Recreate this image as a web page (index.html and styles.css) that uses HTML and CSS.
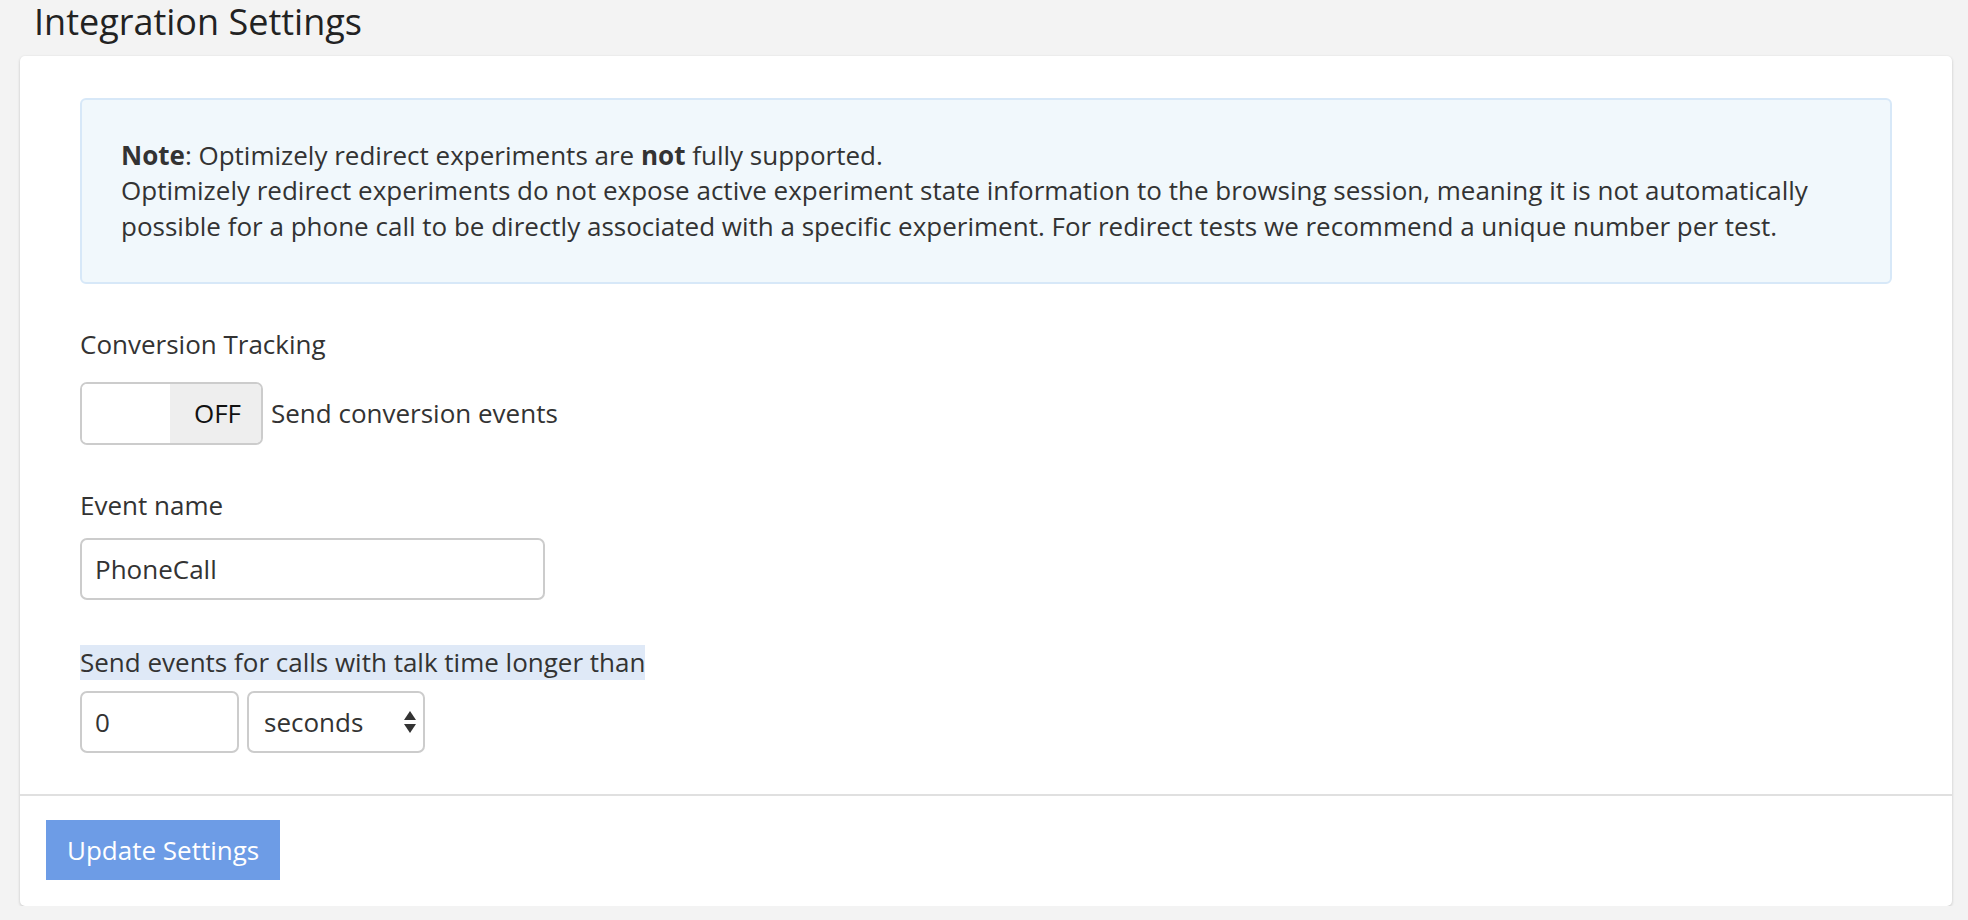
FILE: index.html
```html
<!DOCTYPE html>
<html lang="en">
<head>
    <meta charset="UTF-8">
    <meta name="viewport" content="width=device-width, initial-scale=1.0">
    <title>Integration Settings</title>
    <link rel="stylesheet" href="styles.css">
</head>
<body>
    <h1 class="page-title">Integration Settings</h1>

    <form class="panel">
        <div class="panel-body">
            <div class="alert-info">
                <strong>Note</strong>: Optimizely redirect experiments are <strong>not</strong> fully supported.<br>
                Optimizely redirect experiments do not expose active experiment state information to the browsing session, meaning it is not automatically possible for a phone call to be directly associated with a specific experiment. For redirect tests we recommend a unique number per test.
            </div>

            <div class="form-group">
                <label class="control-label">Conversion Tracking</label>
                <div class="switch-row">
                    <span class="switch">
                        <span class="switch-handle"></span>
                        <span class="switch-off">OFF</span>
                    </span>
                    <span class="switch-text">Send conversion events</span>
                </div>
            </div>

            <div class="form-group">
                <label class="control-label label-tight" for="event-name">Event name</label>
                <input type="text" id="event-name" class="form-control event-input" value="PhoneCall">
            </div>

            <div class="form-group group-duration">
                <label class="control-label label-marked" for="talk-time">Send events for calls with talk time longer than</label>
                <div class="duration-row">
                    <input type="text" id="talk-time" class="form-control number-input" value="0">
                    <span class="select-wrap">
                        <select class="form-control unit-select">
                            <option>seconds</option>
                            <option>minutes</option>
                        </select>
                        <svg class="select-arrows" width="12" height="22" viewBox="0 0 12 22">
                            <polygon points="6,0 12,9 0,9" fill="#333"/>
                            <polygon points="0,13 12,13 6,22" fill="#333"/>
                        </svg>
                    </span>
                </div>
            </div>
        </div>

        <div class="panel-footer">
            <button type="button" class="btn-update">Update Settings</button>
        </div>
    </form>
</body>
</html>
```

FILE: styles.css
```css
body {
    font-family: "Open Sans", "Liberation Sans", sans-serif;
    font-size: 26px;
    line-height: 1.36;
    color: #333;
    background-color: #f3f3f3;
    margin: 0;
    padding: 0 16px 0 20px;
}
.page-title {
    font-size: 36px;
    font-weight: normal;
    line-height: 44px;
    color: #222;
    margin: 0 0 12px 14px;
}
.panel {
    background-color: #fff;
    border-radius: 5px;
    box-shadow: 0 1px 3px rgba(0,0,0,0.2);
}
.panel-body {
    padding: 42px 60px 41px 60px;
}
.alert-info {
    background-color: #f1f8fc;
    border: 2px solid #d7e8f8;
    border-radius: 6px;
    padding: 38px 39px;
    margin-bottom: 43px;
}
.alert-info strong {
    font-weight: bold;
}
.form-group {
    margin-bottom: 43px;
}
.form-group:last-child {
    margin-bottom: 0;
}
.control-label {
    display: block;
    margin-bottom: 20px;
}
.label-tight {
    margin-bottom: 14px;
}
.group-duration {
    margin-top: 45px;
}
.label-marked {
    display: inline-block;
    background-color: #dfe9f7;
    margin-bottom: 11px;
}

/* on/off switch */
.switch-row {
    display: flex;
    align-items: center;
    gap: 8px;
}
.switch {
    display: flex;
    width: 183px;
    height: 63px;
    box-sizing: border-box;
    border: 2px solid #ccc;
    border-radius: 7px;
    overflow: hidden;
}
.switch-handle {
    width: 88px;
    background-color: #fff;
}
.switch-off {
    flex: 1;
    background-color: #eee;
    color: #111;
    display: flex;
    align-items: center;
    justify-content: center;
    padding-left: 4px;
}

/* inputs */
.form-control {
    font-family: inherit;
    font-size: 26px;
    color: #333;
    height: 62px;
    box-sizing: border-box;
    border: 2px solid #ccc;
    border-radius: 7px;
    background-color: #fff;
    padding: 0 13px;
    margin: 0;
    outline: none;
}
.event-input {
    display: block;
    width: 465px;
}
.duration-row {
    display: flex;
    gap: 8px;
}
.number-input {
    width: 159px;
}
.select-wrap {
    position: relative;
    display: block;
}
.unit-select {
    -webkit-appearance: none;
    appearance: none;
    width: 178px;
    padding-left: 15px;
}
.select-arrows {
    position: absolute;
    right: 9px;
    top: 20px;
    pointer-events: none;
}

/* footer */
.panel-footer {
    border-top: 2px solid #e0e0e0;
    padding: 24px 26px 26px;
}
.btn-update {
    font-family: inherit;
    font-size: 26px;
    color: #fff;
    background-color: #6d9ce6;
    border: none;
    border-radius: 0;
    height: 60px;
    padding: 0 21px;
    cursor: pointer;
}
```
